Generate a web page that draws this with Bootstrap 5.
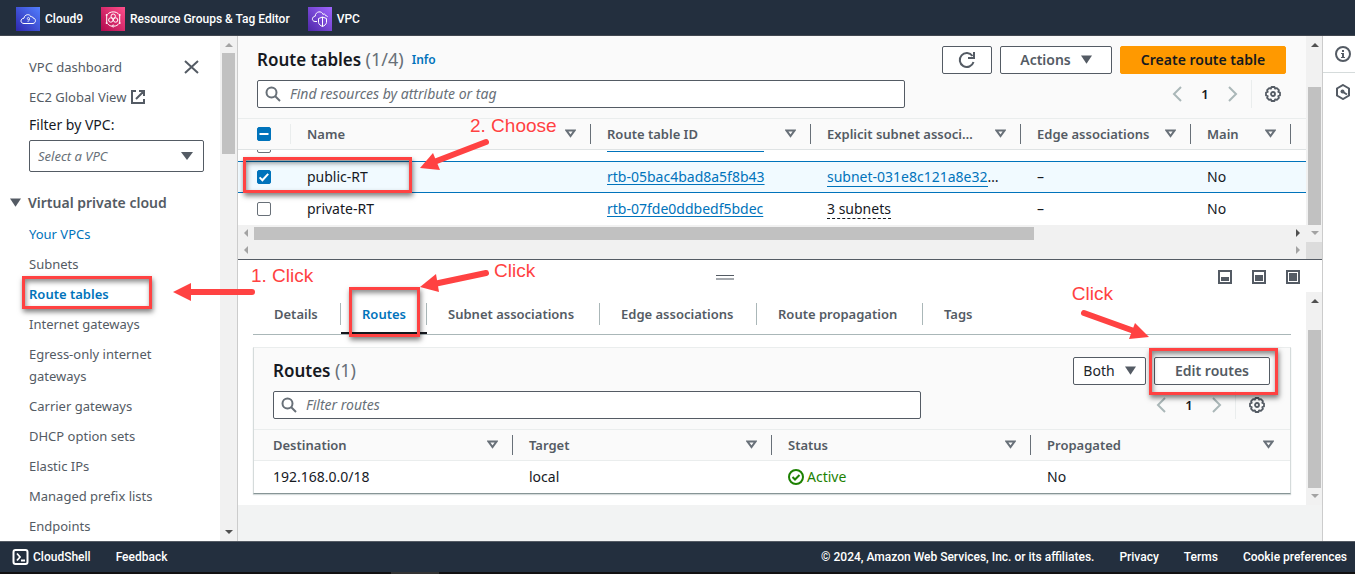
<!DOCTYPE html>
<html lang="en">
<head>
<meta charset="utf-8">
<meta name="viewport" content="width=device-width, initial-scale=1">
<title>Route tables | VPC Console</title>
<link href="https://cdn.jsdelivr.net/npm/bootstrap@5.3.0/dist/css/bootstrap.min.css" rel="stylesheet">
<script src="https://cdn.jsdelivr.net/npm/bootstrap@5.3.0/dist/js/bootstrap.bundle.min.js"></script>
<style>
:root{--ink:#16191f;--grey:#545b64;--mid:#687078;--soft:#aab7b8;--hair:#eaeded;--blue:#0073bb;--red:#ff4242}
body{font-family:"Noto Sans","Open Sans",sans-serif;font-size:13px;line-height:22px;color:var(--ink);height:100vh;overflow:hidden;background:#fff}
a{text-decoration:none}
svg{display:block;flex:none}
b,.semi,th{font-weight:600}
.bar{background:#232f3e;font-family:Roboto,"Open Sans",sans-serif;font-size:12px;font-weight:500}
.bar a,.bar span{color:#fff}
.bar-top{height:36px;padding:4px 16px 0;gap:18px;border-bottom:1px solid #414750}
.bar-top a{gap:5px}
.bar-foot{height:31px;padding:0 8px 0 12px;border-top:1px solid #545b64}
.foot-links{gap:25px}
.taskbar{height:2px;background:#111;padding-left:391px}
.taskbar i{display:block;width:48px;height:2px;background:#333}
/* scroll bars */
.vbar{width:17px;background:#f1f1f1;padding:0 2px;flex:none}
.work .vbar{width:16px;padding-right:1px}
.vbar .cap,.hbar .cap{width:16px;height:17px;flex:none;display:flex;align-items:center;justify-content:center}
.vbar .cap{width:13px}
.grip{background:#c1c1c1}
.hbar{height:17px;background:#f1f1f1;padding:2px 0}
.hbar .cap{height:13px}
.hbar .grip{width:73%}
.cap::before{content:"";border:4px solid transparent}
.up::before{border-bottom-color:#505050;margin-top:-3px}
.down::before{border-top-color:#505050;margin-bottom:-3px}
.left::before{border-right-color:#a3a3a3;margin-left:-4px}
.right::before{border-left-color:#505050;margin-right:-4px}
.up.off::before{border-bottom-color:#a3a3a3}
.down.off::before{border-top-color:#a3a3a3}
.right.off::before{border-left-color:#a3a3a3}
/* side navigation */
.side{width:220px;padding:20px 16px 0 29px;overflow:hidden}
.side li{margin-bottom:8px}
.side a{color:var(--grey)}
.side a.live{color:var(--blue)}
.side ul{padding-right:28px}
.side .group{margin-left:-19px;gap:7px;margin-top:20px;margin-bottom:9px;font-size:14px;font-weight:600;color:var(--grey);background:none;border:0;padding:0}
.box,.tool{border:1px solid var(--grey);border-radius:2px;background:#fff}
.filter-label{margin-top:-2px;font-size:14px}
.pick{height:32px;padding:0 8px;font-style:italic;color:var(--mid);appearance:none;width:175px}
.pick-wrap::after{content:"";position:absolute;right:11px;top:12px;border:6px solid transparent;border-top:8px solid var(--grey);border-bottom:0}
/* panes */
.work{border-left:1px solid #ccc;border-right:1px solid #ccc;background:#f2f3f3;min-width:0}
.upper{border-bottom:1px solid var(--grey)}
.corner{height:17px;background:#dcdcdc;margin:0 -1px 0 -2px}
.pale{background:#fafafa}
.upper-head{padding:10px 20px 10px 19px}
.title-row{margin-bottom:6px}
h1,h2{font-size:17px;line-height:26px;font-weight:600;margin:0}
h1 span,h2 span{font-weight:400;color:var(--mid);font-size:18px;line-height:22px}
.info{font-size:12px;font-weight:600;color:var(--blue)}
.tool{height:28px;color:var(--grey);font-size:14px;font-weight:600;padding:0;display:flex;align-items:center;justify-content:center;gap:10px}
.tool.primary{background:#f90;border-color:#f90;color:var(--ink)}
.w-sm{width:50px}.w-md{width:112px}.w-lg{width:166px}.w-edit{width:116px}.w-both{width:73px}
.find{width:648px;height:28px;padding:0 7px;gap:9px}
.find input{border:0;outline:0;background:none;font-size:14px;font-style:italic;padding:0;color:var(--ink)}
.find input::placeholder{color:var(--mid);opacity:1}
.pager{height:28px;color:var(--soft);margin-right:5px}
.pager button{background:none;border:0;padding:0;color:inherit;display:block}
.pager .num{color:var(--ink);font-weight:600;width:46px;text-align:center}
.pager .gear{color:var(--grey);border-left:1px solid var(--hair);padding:6px 0 6px 13px;height:28px;margin-left:13px}
.grid{width:100%;table-layout:fixed;border-collapse:separate;border-spacing:0}
.grid th,.grid td{height:32px;padding:0 16px;white-space:nowrap;overflow:hidden}
.grid td{font-size:14px}
.grid td:has(.under){padding-right:12px}
.grid th{background:#fafafa;color:var(--grey);border-top:1px solid var(--hair);border-bottom:1px solid var(--hair)}
.upper .grid th{border-bottom-color:#dfe3e4}
.grid th:not(.plain) .head{border-right:1px solid var(--mid);height:20px;margin-right:-16px;padding-right:14px}
.grid th .head{display:flex;align-items:center;justify-content:space-between}
.grid a{color:var(--blue);text-decoration:underline;text-underline-offset:2px}
.grid .tick{padding:0 0 0 19px}
.grid .tick .head{border-color:var(--hair)!important;margin:0!important}
.grid tr.chosen td{background:#f1faff;border-top:1px solid var(--blue);border-bottom:1px solid var(--blue)}
.grid tr.part td{height:11px}
.clip{height:11px;overflow:hidden;display:flex;align-items:flex-end}
.clip input{margin-bottom:8px!important}
.clip a{width:157px;height:12px;border-bottom:1px solid var(--blue);margin-bottom:9px}
.grid .under{text-decoration:none;border-bottom:1px solid var(--blue)}
.dash{border-bottom:1px dashed var(--ink)}
.grid .under,.grid .dash{display:inline-block;line-height:18px}
.cb{appearance:none;display:block;width:14px;height:14px;margin:0;border:1px solid var(--mid);border-radius:2px;background:#fff center/14px no-repeat;flex:none}
.cb:checked{background-color:var(--blue);border-color:var(--blue);background-image:url("data:image/svg+xml,%3Csvg xmlns='http://www.w3.org/2000/svg' viewBox='0 0 14 14'%3E%3Cpath d='M2.6 7.4l2.8 2.8 5.8-6.4' fill='none' stroke='white' stroke-width='2'/%3E%3C/svg%3E")}
.cb.some{background-color:var(--blue);border-color:var(--blue);background-image:url("data:image/svg+xml,%3Csvg xmlns='http://www.w3.org/2000/svg' viewBox='0 0 14 14'%3E%3Cpath d='M2.5 7h9' stroke='white' stroke-width='2'/%3E%3C/svg%3E")}
/* split panel */
.lower{background:#fff;margin-bottom:36px}
.split{height:32px;padding:10px 22px 0 0}
.split .sizes{gap:20px;padding-left:6px}
.handle{width:18px;height:5px;border:0;padding:0;background:linear-gradient(var(--grey) 1px,transparent 1px 3px,#a5a9ae 3px);margin-top:5px}
.tabs{display:grid;grid-template-columns:88px 86px 173px 157px 166px auto;height:43px;margin:0 15px;border-bottom:1px solid var(--soft);padding-top:7px}
.tabs button{display:flex;align-items:flex-start;background:none;border:0;padding:4px 0 0 21px;text-align:left;font-weight:600;color:var(--grey);white-space:nowrap}
.tabs button:not(:last-child){background:linear-gradient(var(--soft),var(--soft)) right 4px/1px 22px no-repeat}
.tabs button.on{color:var(--blue);border-bottom:2px solid var(--ink)}
.panel{margin:12px 15px 11px;border:1px solid #d5dbdb;border-top-color:var(--hair);border-bottom:1px solid #879596;box-shadow:0 1px 1px #d5dbdb}
.panel-head{padding:9px 20px 10px 19px}
.panel td:first-child,.panel th:first-child{padding-left:19px}
.ok{color:#1d8102;gap:3px}
.rail{width:32px;color:var(--grey);flex:none}
.rail button{border:0;background:none;padding:10px 0 9px 12px;height:37px;display:block;width:100%;color:inherit}
.rail button:first-child{border-bottom:1px solid #d5dbdb}
/* walkthrough marks that lie over the console */
.mark-up{position:absolute;pointer-events:none}
.frame{border:3px solid var(--red);box-shadow:1px 3px 5px rgba(0,0,0,.5),inset 1px 3px 5px rgba(0,0,0,.45)}
.say{color:var(--red);font:19px/20px "Liberation Sans",Arial,sans-serif;white-space:nowrap;text-shadow:0 0 2px #fff,0 0 3px #fff,0 0 4px #fff}
</style>
</head>
<body class="d-flex flex-column position-relative">
<svg width="0" height="0" class="position-absolute" aria-hidden="true">
<symbol id="sort" viewBox="0 0 11 9"><path d="M1.500 1.500h8L5.500 7z" fill="none" stroke="#687078" stroke-width="2"/></symbol>
<symbol id="caret" viewBox="0 0 12 9"><path d="M0 0h12L6 9z" fill="#545b64"/></symbol>
<symbol id="lens" viewBox="0 0 16 16"><circle cx="6.500" cy="6.500" r="5" fill="none" stroke="#687078" stroke-width="2"/><path d="M10 10l5 5" stroke="#687078" stroke-width="2"/></symbol>
<symbol id="prev" viewBox="0 0 10 16"><path d="M9 1L2 8l7 7" fill="none" stroke="currentColor" stroke-width="2"/></symbol>
<symbol id="next" viewBox="0 0 10 16"><path d="M1 1l7 7-7 7" fill="none" stroke="currentColor" stroke-width="2"/></symbol>
<symbol id="gear" viewBox="0 0 16 16"><path d="M6.500 1h3l.6 1.700 1.800-.6 2 2-.6 1.800 1.700.6v3l-1.700.6.6 1.800-2 2-1.800-.6-.6 1.700h-3l-.6-1.700-1.800.6-2-2 .6-1.800L1 9.500v-3l1.700-.6-.6-1.800 2-2 1.800.6z" fill="none" stroke="currentColor" stroke-width="1.800" stroke-linejoin="round"/><circle cx="8" cy="8" r="2" fill="none" stroke="currentColor" stroke-width="1.800"/></symbol>
</svg>

<header class="bar bar-top d-flex align-items-center">
<a href="#" class="d-flex align-items-center"><svg width="24" height="24" viewBox="0 0 24 24"><defs><linearGradient id="g1" x1="0" y1="1" x2="1" y2="0"><stop stop-color="#2e27ad"/><stop offset="1" stop-color="#527fff"/></linearGradient></defs><path fill="url(#g1)" d="M0 0h24v24H0z"/><path d="M8 16.500h9c3.500-.5 3-5.500 0-5.500 0-1-1.500-1.800-2-1-1-3.500-6.500-3-7 1.200-4 .3-4 5.300 0 5.300z" fill="none" stroke="#fff"/><path d="M11.500 14.300c1.400.3 2-1 2-2.600 0-1.800-2.200-1.600-2.200-.2s1.600 1.500 2.200.4" fill="none" stroke="#fff" stroke-width=".8"/></svg><span>Cloud9</span></a>
<a href="#" class="d-flex align-items-center"><svg width="24" height="24" viewBox="0 0 24 24"><defs><linearGradient id="g2" x1="0" y1="1" x2="1" y2="0"><stop stop-color="#b0084d"/><stop offset="1" stop-color="#ff4f8b"/></linearGradient></defs><path fill="url(#g2)" d="M0 0h24v24H0z"/><g fill="none" stroke="#fff"><path d="M6.500 7.500C9 4 15.500 4 18 7.500M6.500 16.500c1.500 2 3 2.500 4.500 2.700M13.500 19.200c1.800-.3 3.200-1 4.500-2.700M5.700 9v6M18.700 9v6"/><circle cx="12.200" cy="9.200" r="2.200"/><circle cx="9.800" cy="13" r="2.200"/><circle cx="14.600" cy="13" r="2.200"/><circle cx="12.200" cy="19" r="1"/></g><g fill="#fff"><circle cx="5.700" cy="8" r="1"/><circle cx="18.700" cy="8" r="1"/><circle cx="5.700" cy="16" r="1"/><circle cx="18.700" cy="16" r="1"/></g></svg><span>Resource Groups &amp; Tag Editor</span></a>
<a href="#" class="d-flex align-items-center"><svg width="24" height="24" viewBox="0 0 24 24"><defs><linearGradient id="g3" x1="0" y1="1" x2="1" y2="0"><stop stop-color="#4d27a8"/><stop offset="1" stop-color="#a166ff"/></linearGradient></defs><path fill="url(#g3)" d="M0 0h24v24H0z"/><g fill="none" stroke="#fff"><path d="M9 14.500H7c-4-.5-3-5 .2-5.300C7.500 4 14 3.500 15 7.500c1-1 2.500-.3 2.500 1 1 0 1.600.5 2 1.300"/><path d="M10.500 11.500l4-1.500 4 1.500v4c-.3 1.800-2 3.200-4 4-2-.8-3.700-2.200-4-4zM14.500 10v9.500"/></g></svg><span>VPC</span></a>
</header>

<main class="d-flex flex-fill position-relative" style="min-height:0">
<nav class="side flex-shrink-0" aria-label="VPC">
<ul class="list-unstyled m-0 p-0">
<li class="d-flex justify-content-between align-items-center"><a href="#">VPC dashboard</a><button class="border-0 bg-transparent p-0 me-1" aria-label="Close"><svg width="17" height="14" viewBox="0 0 17 14"><path d="M2 1l13 12M15 1L2 13" stroke="#545b64" stroke-width="2"/></svg></button></li>
<li class="mb-2"><a href="#" class="d-flex align-items-center gap-1">EC2 Global View <svg width="16" height="16" viewBox="0 0 16 16"><path d="M6 2H2v12h12v-4M9 2h5v5M14 2L6 10" fill="none" stroke="#545b64" stroke-width="2"/></svg></a></li>
</ul>
<label for="vpc" class="d-block filter-label">Filter by VPC:</label>
<div class="position-relative pick-wrap mt-1"><select id="vpc" class="box pick"><option>Select a VPC</option></select></div>
<button class="group d-flex align-items-center"><svg width="11" height="9"><use href="#caret"/></svg>Virtual private cloud</button>
<ul class="list-unstyled m-0">
<li><a href="#" class="live">Your VPCs</a></li>
<li><a href="#">Subnets</a></li>
<li><a href="#" class="live semi">Route tables</a></li>
<li><a href="#">Internet gateways</a></li>
<li><a href="#">Egress-only internet gateways</a></li>
<li><a href="#">Carrier gateways</a></li>
<li><a href="#">DHCP option sets</a></li>
<li><a href="#">Elastic IPs</a></li>
<li><a href="#">Managed prefix lists</a></li>
<li><a href="#">Endpoints</a></li>
</ul>
</nav>
<div class="vbar d-flex flex-column"><i class="cap up off"></i><i class="grip" style="height:20%"></i><i class="cap down mt-auto"></i></div>

<div class="work flex-fill d-flex flex-column">
<section class="upper d-flex">
<div class="flex-fill bg-white" style="min-width:0">
<div class="pale upper-head">
<div class="title-row d-flex align-items-center gap-2">
<h1>Route tables <span>(1/4)</span></h1><a href="#" class="info">Info</a>
<div class="d-flex gap-2 ms-auto">
<button class="tool w-sm" aria-label="Refresh"><svg width="18" height="18" viewBox="0 0 18 18"><path d="M15.500 11A7 7 0 1 1 14.500 5" fill="none" stroke="#545b64" stroke-width="2"/><path d="M16 1v6h-6" fill="none" stroke="#545b64" stroke-width="2"/></svg></button>
<button class="tool w-md">Actions<svg width="11" height="9"><use href="#caret"/></svg></button>
<button class="tool primary w-lg">Create route table</button>
</div></div>
<div class="d-flex justify-content-between">
<label class="find box d-flex align-items-center"><svg width="16" height="16"><use href="#lens"/></svg><input class="flex-fill" type="text" placeholder="Find resources by attribute or tag" aria-label="Find resources by attribute or tag"></label>
<div class="pager d-flex align-items-center"><button aria-label="Previous page"><svg width="10" height="16"><use href="#prev"/></svg></button><span class="num">1</span><button aria-label="Next page"><svg width="10" height="16"><use href="#next"/></svg></button><button class="gear" aria-label="Preferences"><svg width="16" height="16"><use href="#gear"/></svg></button></div>
</div></div>
<table class="grid">
<colgroup><col style="width:53px"><col style="width:300px"><col style="width:220px"><col style="width:210px"><col style="width:170px"><col style="width:100px"><col></colgroup>
<thead><tr><th class="tick"><div class="head"><input type="checkbox" class="cb some" aria-label="Select all"></div></th>
<th><div class="head">Name<svg width="11" height="9"><use href="#sort"/></svg></div></th>
<th><div class="head">Route table ID<svg width="11" height="9"><use href="#sort"/></svg></div></th>
<th><div class="head">Explicit subnet associ…<svg width="11" height="9"><use href="#sort"/></svg></div></th>
<th><div class="head">Edge associations<svg width="11" height="9"><use href="#sort"/></svg></div></th>
<th><div class="head">Main<svg width="11" height="9"><use href="#sort"/></svg></div></th><th class="plain p-0"></th></tr></thead>
<tbody>
<tr class="part"><td class="tick"><div class="clip"><input type="checkbox" class="cb" aria-label="Select row"></div></td><td></td><td><div class="clip"><a href="#" aria-label="Route table"></a></div></td><td></td><td></td><td></td><td class="p-0"></td></tr>
<tr class="chosen"><td class="tick"><input type="checkbox" class="cb" checked aria-label="Select public-RT"></td><td>public-RT</td><td><a href="#">rtb-05bac4bad8a5f8b43</a></td><td><a href="#" class="under">subnet-031e8c121a8e32</a>…</td><td>–</td><td>No</td><td class="p-0"></td></tr>
<tr><td class="tick"><input type="checkbox" class="cb" aria-label="Select private-RT"></td><td>private-RT</td><td><a href="#">rtb-07fde0ddbedf5bdec</a></td><td><span class="dash">3 subnets</span></td><td>–</td><td>No</td><td class="p-0"></td></tr>
</tbody></table>
<div class="hbar d-flex"><i class="cap left"></i><i class="grip"></i><i class="cap right ms-auto"></i></div>
<div class="hbar d-flex"><i class="cap left"></i><i class="cap right off ms-auto"></i></div>
</div>
<div class="vbar d-flex flex-column"><i class="cap up"></i><i class="flex-fill d-flex flex-column justify-content-end"><i class="grip" style="height:80%"></i></i><i class="cap down off"></i><i class="corner"></i></div>
</section>

<section class="lower flex-fill d-flex flex-column" style="min-height:0">
<div class="split d-flex align-items-start">
<button class="handle mx-auto" aria-label="Resize panel"></button>
<div class="sizes d-flex">
<svg width="14" height="14"><path d="M1 1h12v12H1z" fill="none" stroke="#545b64" stroke-width="2"/><path d="M3 7h8v4H3z" fill="#545b64"/></svg>
<svg width="14" height="14"><path d="M1 1h12v12H1z" fill="none" stroke="#545b64" stroke-width="2"/><path d="M3 5h8v6H3z" fill="#545b64"/></svg>
<svg width="14" height="14"><path d="M1 1h12v12H1z" fill="none" stroke="#545b64" stroke-width="2"/><path d="M3 3h8v8H3z" fill="#545b64"/></svg>
</div></div>
<div class="d-flex flex-fill">
<div class="flex-fill" style="min-width:0">
<div class="tabs" role="tablist"><button role="tab">Details</button><button role="tab" class="on">Routes</button><button role="tab">Subnet associations</button><button role="tab">Edge associations</button><button role="tab">Route propagation</button><button role="tab">Tags</button></div>
<div class="panel">
<div class="pale panel-head">
<div class="title-row d-flex align-items-center gap-2"><h2>Routes <span>(1)</span></h2>
<button class="tool w-both ms-auto fw-normal text-dark">Both<svg width="11" height="9"><use href="#caret"/></svg></button><button class="tool w-edit">Edit routes</button></div>
<div class="d-flex justify-content-between"><label class="find box d-flex align-items-center mt-0"><svg width="16" height="16"><use href="#lens"/></svg><input class="flex-fill" type="text" placeholder="Filter routes" aria-label="Filter routes"></label>
<div class="pager d-flex align-items-center"><button aria-label="Previous page"><svg width="10" height="16"><use href="#prev"/></svg></button><span class="num">1</span><button aria-label="Next page"><svg width="10" height="16"><use href="#next"/></svg></button><button class="gear" aria-label="Preferences"><svg width="16" height="16"><use href="#gear"/></svg></button></div></div>
</div>
<table class="grid">
<thead><tr><th><div class="head">Destination<svg width="11" height="9"><use href="#sort"/></svg></div></th><th><div class="head">Target<svg width="11" height="9"><use href="#sort"/></svg></div></th><th><div class="head">Status<svg width="11" height="9"><use href="#sort"/></svg></div></th><th class="plain"><div class="head">Propagated<svg width="11" height="9"><use href="#sort"/></svg></div></th></tr></thead>
<tbody><tr><td>192.168.0.0/18</td><td>local</td><td><span class="ok d-flex align-items-center"><svg width="16" height="16"><circle cx="8" cy="8" r="7" fill="none" stroke="#1d8102" stroke-width="2"/><path d="M4.500 8l2.500 2.500 4.500-4.500" fill="none" stroke="#1d8102" stroke-width="2"/></svg>Active</span></td><td>No</td></tr></tbody>
</table></div>
</div>
<div class="vbar d-flex flex-column"><i class="cap up"></i><i class="flex-fill d-flex flex-column justify-content-end"><i class="grip" style="height:88%"></i></i><i class="cap down off"></i></div>
</div>
</section>
</div>

<aside class="rail">
<button aria-label="Info"><svg width="16" height="16"><circle cx="8" cy="8" r="7" fill="none" stroke="#545b64" stroke-width="2"/><path d="M7 4h2v2H7zM6 7h3v4h1v1H6v-1h1V8H6z" fill="#545b64"/></svg></button>
<button aria-label="Diagnostics"><svg width="16" height="16"><path d="M8 1l6 3.500v7L8 15l-6-3.500v-7z" fill="none" stroke="#545b64" stroke-width="2"/><circle cx="7.500" cy="7.500" r="2" fill="#545b64"/><path d="M8 8l4 2.500" stroke="#545b64" stroke-width="2"/></svg></button>
</aside>
</main>

<footer>
<div class="bar bar-foot d-flex align-items-center justify-content-between">
<div class="foot-links d-flex"><a href="#" class="d-flex align-items-center"><svg width="17" height="16" class="me-1" viewBox="0 0 17 16"><rect x="1.500" y="1" width="14" height="14" rx="2" fill="none" stroke="#fff" stroke-width="2"/><path d="M5 4.500L8 8l-3 3.500M9 11.500h4" fill="none" stroke="#fff" stroke-width="1.800"/></svg>CloudShell</a><a href="#">Feedback</a></div>
<div class="foot-links d-flex"><span>© 2024, Amazon Web Services, Inc. or its affiliates.</span><a href="#">Privacy</a><a href="#">Terms</a><a href="#">Cookie preferences</a></div>
</div>
<div class="taskbar"><i></i></div>
</footer>

<div class="mark-up frame" style="left:22px;top:276px;width:130px;height:33px"></div>
<div class="mark-up frame" style="left:243px;top:157px;width:169px;height:36px"></div>
<div class="mark-up frame" style="left:349px;top:287px;width:71px;height:50px"></div>
<div class="mark-up frame" style="right:77px;top:348px;width:129px;height:47px"></div>
<span class="mark-up say" style="left:251px;top:266px">1. Click</span>
<span class="mark-up say" style="left:470px;top:116px">2. Choose</span>
<span class="mark-up say" style="left:494px;top:261px">Click</span>
<span class="mark-up say" style="right:242px;top:284px">Click</span>
<svg class="mark-up" style="left:170px;top:280px" width="90" height="26"><path d="M82 12H18" stroke="#ff4242" stroke-width="6" stroke-linecap="round"/><path d="M3 12l18-9v18z" fill="#ff4242"/></svg>
<svg class="mark-up" style="left:418px;top:138px" width="75" height="36"><path d="M68 4L16 24" stroke="#ff4242" stroke-width="6" stroke-linecap="round"/><path d="M2 30L15 15l7 17z" fill="#ff4242"/></svg>
<svg class="mark-up" style="left:418px;top:265px" width="75" height="32"><path d="M68 8L16 19" stroke="#ff4242" stroke-width="6" stroke-linecap="round"/><path d="M2 22L18 9l3 18z" fill="#ff4242"/></svg>
<svg class="mark-up" style="right:205px;top:308px" width="70" height="34"><path d="M4 5l50 18" stroke="#ff4242" stroke-width="6" stroke-linecap="round"/><path d="M69 29l-20 2 6-16z" fill="#ff4242"/></svg>
</body>
</html>
